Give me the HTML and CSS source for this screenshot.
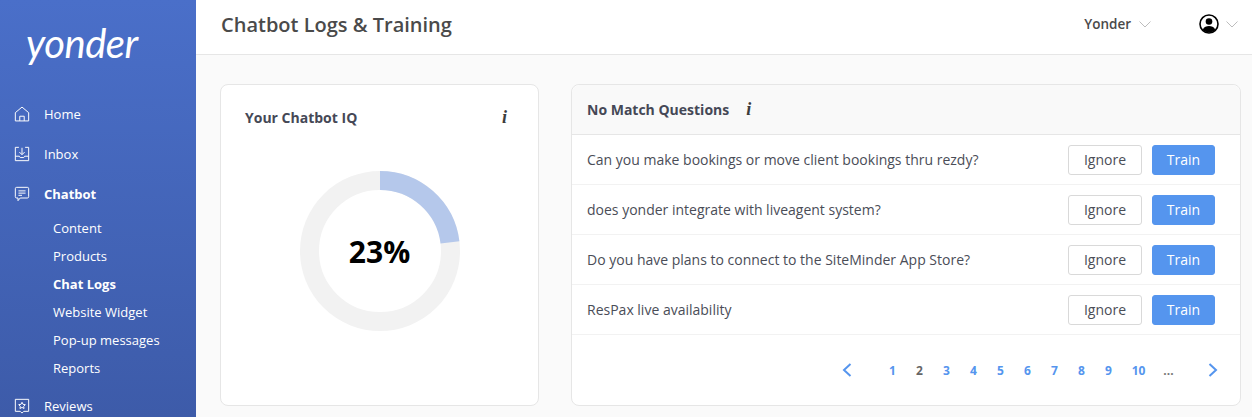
FILE: index.html
```html
<!DOCTYPE html>
<html lang="en">
<head>
    <meta charset="UTF-8">
    <meta name="viewport" content="width=device-width, initial-scale=1.0">
    <title>Chatbot Logs &amp; Training</title>
    <link rel="stylesheet" href="styles.css">
</head>
<body>
    <div class="app">
        <!-- Sidebar -->
        <aside class="sidebar">
            <div class="logo">yonder</div>
            <nav class="nav">
                <a class="nav-item">
                    <svg class="nav-icon" viewBox="0 0 18 18"><path d="M1.5 7.5 9 1.2l7.500 6.300v9.300h-15zM6.500 16.800v-5.300h5v5.300"/></svg>
                    Home
                </a>
                <a class="nav-item">
                    <svg class="nav-icon" viewBox="0 0 18 18"><path d="M5.500 1.500H1.500v15h15v-15h-4M9 2v7.500M6 6.800 9 9.800l3-3M1.500 11.500h4.500l1 1.500h4l1-1.500h4.500"/></svg>
                    Inbox
                </a>
                <a class="nav-item nav-item-bold">
                    <svg class="nav-icon" viewBox="0 0 18 18"><path d="M3 1.500h12q1.500 0 1.500 1.500v9q0 1.500-1.500 1.500H7l-2.500 3v-3H3q-1.500 0-1.500-1.500V3q0-1.500 1.500-1.500zM5 5.500h8M5 8h8M5 10.500h4"/></svg>
                    Chatbot
                </a>
                <div class="subnav">
                    <a class="subnav-item">Content</a>
                    <a class="subnav-item">Products</a>
                    <a class="subnav-item subnav-active">Chat Logs</a>
                    <a class="subnav-item">Website Widget</a>
                    <a class="subnav-item">Pop-up messages</a>
                    <a class="subnav-item">Reports</a>
                </div>
                <a class="nav-item">
                    <svg class="nav-icon" viewBox="0 0 18 18"><path d="M1.500 1.500h15v13.500h-5.500L9 17l-2-2H1.500zM9 4.800l1.200 2.400 2.500.3-1.800 1.800.4 2.500L9 10.600l-2.300 1.200.4-2.500-1.800-1.800 2.500-.3z"/></svg>
                    Reviews
                </a>
            </nav>
        </aside>

        <div class="main">
            <!-- Header -->
            <header class="topbar">
                <h1 class="page-title">Chatbot Logs &amp; Training</h1>
                <div class="account">
                    <span class="account-name">Yonder</span>
                    <svg class="chevron" viewBox="0 0 12 7"><path d="M.5.500 6 6 11.500.5"/></svg>
                </div>
                <div class="user">
                    <svg class="user-icon" viewBox="0 0 20 20">
                        <circle cx="10" cy="10" r="9" fill="#fff" stroke="#000" stroke-width="1.600"/>
                        <circle cx="10" cy="7.500" r="3.300" fill="#000"/>
                        <path d="M3.800 15.500C5 12.800 7.500 12 10 12s5 .8 6.200 3.500C14.500 17.700 12.500 18.500 10 18.500s-4.500-.8-6.200-3z" fill="#000"/>
                    </svg>
                    <svg class="chevron" viewBox="0 0 12 7"><path d="M.5.500 6 6 11.500.5"/></svg>
                </div>
            </header>

            <div class="content">
                <!-- IQ card -->
                <section class="card iq-card">
                    <div class="iq-head">
                        <h2 class="card-title">Your Chatbot IQ</h2>
                        <span class="info">i</span>
                    </div>
                    <div class="donut">
                        <svg viewBox="0 0 160 160" width="160" height="160">
                            <circle class="donut-track" cx="80" cy="80" r="70.500"/>
                            <circle class="donut-value" cx="80" cy="80" r="70.500" stroke-dasharray="101.900 443" transform="rotate(-90 80 80)"/>
                        </svg>
                        <div class="donut-label">23%</div>
                    </div>
                </section>

                <!-- Questions table -->
                <section class="card questions">
                    <div class="questions-head">
                        <h2 class="card-title">No Match Questions</h2>
                        <span class="info">i</span>
                    </div>
                    <div class="row">
                        <span class="question">Can you make bookings or move client bookings thru rezdy?</span>
                        <button class="btn btn-ignore">Ignore</button>
                        <button class="btn btn-train">Train</button>
                    </div>
                    <div class="row">
                        <span class="question">does yonder integrate with liveagent system?</span>
                        <button class="btn btn-ignore">Ignore</button>
                        <button class="btn btn-train">Train</button>
                    </div>
                    <div class="row">
                        <span class="question">Do you have plans to connect to the SiteMinder App Store?</span>
                        <button class="btn btn-ignore">Ignore</button>
                        <button class="btn btn-train">Train</button>
                    </div>
                    <div class="row">
                        <span class="question">ResPax live availability</span>
                        <button class="btn btn-ignore">Ignore</button>
                        <button class="btn btn-train">Train</button>
                    </div>
                    <div class="pager">
                        <svg class="pager-arrow pager-prev" viewBox="0 0 10 14"><path d="M8.500 1 2 7l6.500 6"/></svg>
                        <a class="page">1</a>
                        <a class="page page-current">2</a>
                        <a class="page">3</a>
                        <a class="page">4</a>
                        <a class="page">5</a>
                        <a class="page">6</a>
                        <a class="page">7</a>
                        <a class="page">8</a>
                        <a class="page">9</a>
                        <a class="page page-wide">10</a>
                        <a class="page page-more">...</a>
                        <svg class="pager-arrow pager-next" viewBox="0 0 10 14"><path d="M1.500 1 8 7l-6.500 6"/></svg>
                    </div>
                </section>
            </div>
        </div>
    </div>
</body>
</html>
```
FILE: styles.css
```css
/* General */
html, body {
    height: 100%;
    margin: 0;
    overflow: hidden;
}
body {
    font-family: "Open Sans", Arial, sans-serif;
    background: #fafafa;
    color: #4a4d57;
}
.app {
    display: flex;
    height: 100%;
}

/* Sidebar */
.sidebar {
    width: 196px;
    flex-shrink: 0;
    background: linear-gradient(180deg, #4a6fc9 0%, #3d5ba9 100%);
    color: #fff;
    overflow: hidden;
}
.logo {
    height: 94px;
    padding: 18px 0 0 26px;
    box-sizing: border-box;
    font-family: Lato, "Open Sans", sans-serif;
    font-style: italic;
    font-size: 40px;
    line-height: 50px;
    letter-spacing: -0.5px;
}
.nav-item {
    display: flex;
    align-items: center;
    gap: 14px;
    height: 40px;
    padding-left: 14px;
    font-size: 13px;
}
.nav-item-bold {
    font-weight: 700;
}
.nav-icon {
    width: 16px;
    height: 16px;
    flex-shrink: 0;
    fill: none;
    stroke: #fff;
    stroke-width: 1.100;
}
.subnav {
    display: flex;
    flex-direction: column;
    padding: 0 0 4px 53px;
}
.subnav-item {
    height: 28px;
    line-height: 28px;
    font-size: 13px;
}
.subnav-active {
    font-weight: 700;
}

/* Header */
.main {
    flex: 1;
    min-width: 0;
}
.topbar {
    display: flex;
    align-items: center;
    height: 54px;
    padding-left: 25px;
    background: #fff;
    border-bottom: 1px solid #e6e6e6;
}
.page-title {
    flex: 1;
    margin: 0 0 5px;
    font-size: 20px;
    font-weight: 600;
    color: #4a4a4a;
}
.account {
    display: flex;
    align-items: center;
    gap: 8px;
    margin: 0 48px 6px 0;
}
.account-name {
    font-size: 13.500px;
    font-weight: 600;
    color: #4a4a4a;
}
.user {
    display: flex;
    align-items: center;
    gap: 7px;
    margin: 0 14px 6px 0;
}
.user-icon {
    width: 20px;
    height: 20px;
}
.chevron {
    width: 12px;
    height: 7px;
    fill: none;
    stroke: #bdbdbd;
    stroke-width: 1;
}

/* Cards */
.content {
    display: flex;
    gap: 32px;
    padding: 29px 11px 0 24px;
}
.card {
    height: 322px;
    box-sizing: border-box;
    background: #fff;
    border: 1px solid #e6e6e6;
    border-radius: 8px;
}
.card-title {
    margin: 0;
    font-size: 14px;
    font-weight: 700;
    color: #454856;
}
.info {
    font-family: "Liberation Serif", serif;
    font-style: italic;
    font-weight: 700;
    font-size: 18px;
    color: #3c3c3c;
}

/* IQ card */
.iq-card {
    width: 319px;
    flex-shrink: 0;
}
.iq-head {
    display: flex;
    justify-content: space-between;
    align-items: center;
    padding: 22px 31px 0 24px;
}
.donut {
    position: relative;
    width: 160px;
    height: 160px;
    margin: 43px auto 0;
}
.donut-track, .donut-value {
    fill: none;
    stroke-width: 19;
}
.donut-track {
    stroke: #f2f2f2;
}
.donut-value {
    stroke: #b5c8eb;
}
.donut-label {
    position: absolute;
    inset: 0;
    display: flex;
    align-items: center;
    justify-content: center;
    font-size: 30px;
    font-weight: 700;
    color: #000;
}

/* Questions table */
.questions {
    flex: 1;
    min-width: 0;
}
.questions-head {
    display: flex;
    align-items: center;
    gap: 17px;
    height: 49px;
    padding-left: 15px;
    background: #f9f9f9;
    border-bottom: 1px solid #e6e6e6;
    border-radius: 8px 8px 0 0;
}
.row {
    display: flex;
    align-items: center;
    height: 50px;
    box-sizing: border-box;
    padding: 0 25px 0 15px;
    border-bottom: 1px solid #f2f2f2;
}
.question {
    flex: 1;
    font-size: 14px;
    color: #4a4d57;
}
.btn {
    height: 30px;
    box-sizing: border-box;
    border-radius: 3px;
    font-family: inherit;
    font-size: 14px;
    padding: 0;
}
.btn-ignore {
    width: 74px;
    margin-right: 10px;
    background: #fff;
    border: 1px solid #d9d9d9;
    color: #4a4d57;
}
.btn-train {
    width: 63px;
    background: #5595ee;
    border: 1px solid #5595ee;
    color: #fff;
}

/* Pager */
.pager {
    display: flex;
    align-items: center;
    height: 70px;
    padding-left: 270px;
}
.pager-arrow {
    width: 10px;
    height: 14px;
    fill: none;
    stroke: #5595ee;
    stroke-width: 2;
}
.pager-prev {
    margin-right: 27px;
}
.pager-next {
    margin-left: 26px;
}
.page {
    width: 27px;
    text-align: center;
    font-size: 12px;
    font-weight: 700;
    color: #5595ee;
}
.page-current {
    color: #666;
}
.page-wide {
    width: 33px;
}
.page-more {
    color: #777;
}
```
